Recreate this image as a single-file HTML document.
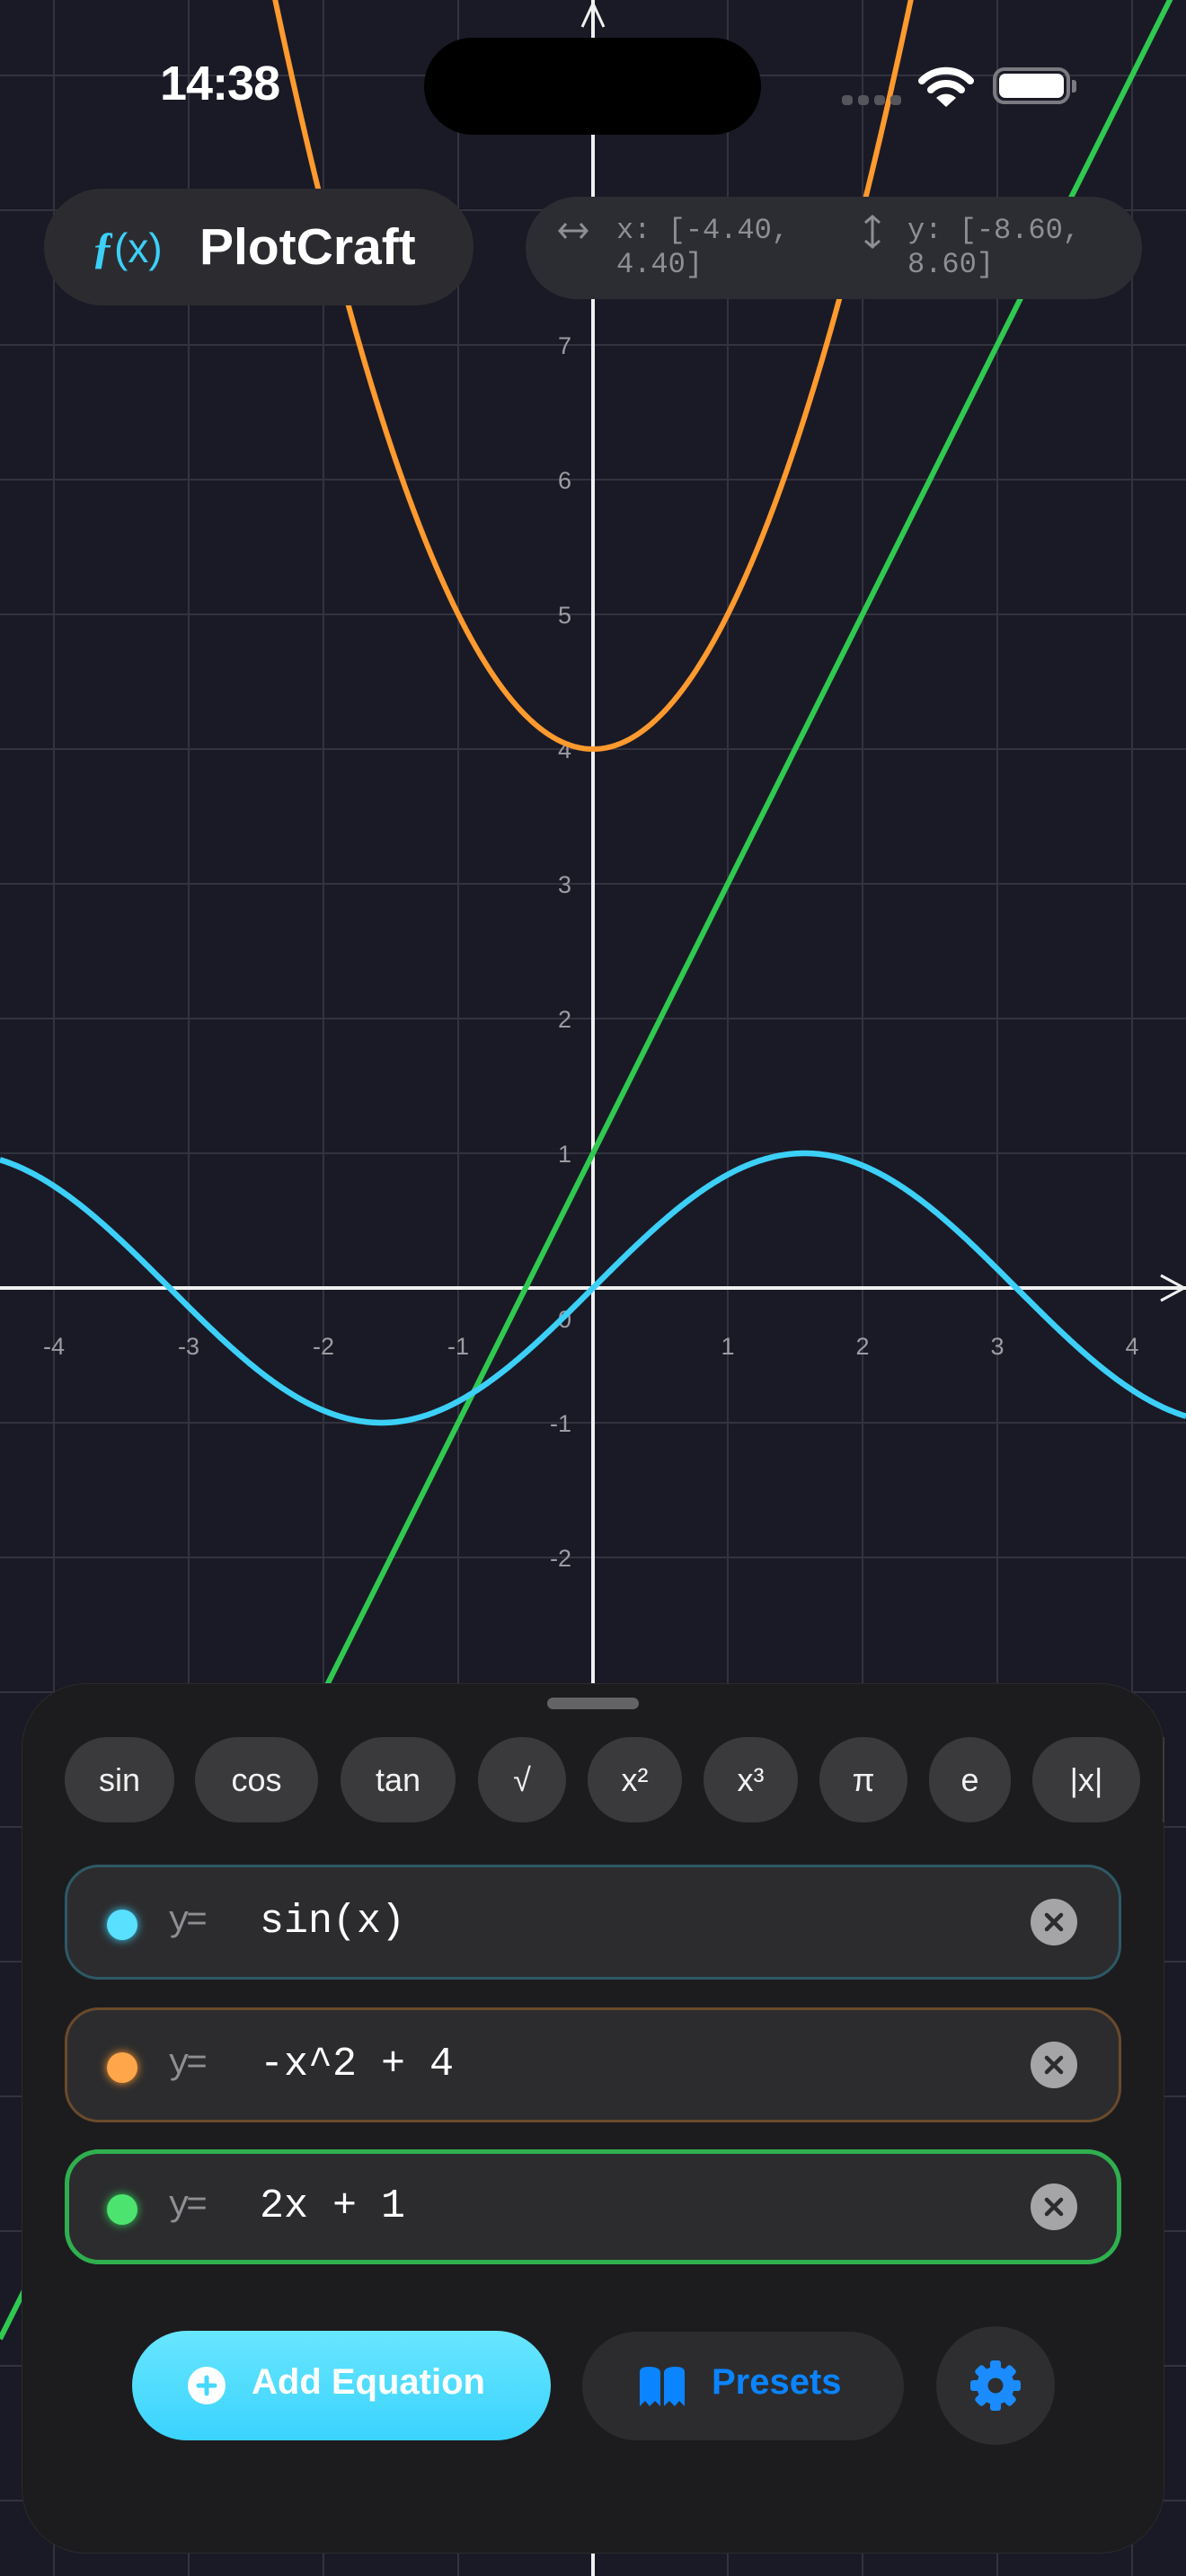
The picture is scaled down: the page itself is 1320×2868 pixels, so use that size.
<!DOCTYPE html>
<html><head><meta charset="utf-8">
<style>
*{margin:0;padding:0;box-sizing:border-box}
html,body{width:1320px;height:2868px;overflow:hidden;background:#1a1a26}
body{position:relative;font-family:"Liberation Sans",sans-serif}
.abs{position:absolute}
.pill{position:absolute;border-radius:70px;background:#2c2c30}
.chip{position:absolute;top:1934px;height:95px;border-radius:48px;background:#3a3a3c;color:#f2f2f2;font-size:36px;display:flex;align-items:center;justify-content:center}
.row{position:absolute;left:72px;width:1176px;height:128px;border-radius:38px;background:#2c2c2e;border:3px solid}
.dot{position:absolute;left:44px;top:47px;width:34px;height:34px;border-radius:50%}
.yeq{position:absolute;left:112px;top:0;line-height:122px;font-size:40px;color:#8e8e93;font-family:"Liberation Mono",monospace;letter-spacing:-4px}
.expr{position:absolute;left:214px;top:0;line-height:122px;font-size:45px;color:#fff;font-family:"Liberation Mono",monospace}
.xb{position:absolute;left:1072px;top:35px;width:52px;height:52px;border-radius:50%;background:#a5a5a8}
</style></head><body>
<svg class="abs" style="left:0;top:0" width="1320" height="2868" viewBox="0 0 1320 2868">
<g id="grid" stroke="#33333f" stroke-width="2"></g>
<g id="labels" fill="#9c9ca4" font-family="Liberation Sans,sans-serif" font-size="27"></g>
<line x1="660" y1="0" x2="660" y2="2868" stroke="#f0f0f0" stroke-width="4"/>
<line x1="0" y1="1434" x2="1320" y2="1434" stroke="#f0f0f0" stroke-width="4"/>
<path d="M648 30 L660 4 L672 30" fill="none" stroke="#f0f0f0" stroke-width="3"/>
<path d="M1292 1420 L1318 1434 L1292 1448" fill="none" stroke="#f0f0f0" stroke-width="3"/>
<path id="pg" fill="none" stroke="#30c950" stroke-width="6"/>
<path id="po" fill="none" stroke="#ff9a2e" stroke-width="6"/>
<path id="ps" fill="none" stroke="#3cd0f8" stroke-width="6.5"/>
</svg>
<script>
(function(){
var ns="http://www.w3.org/2000/svg",g=document.getElementById('grid'),L=document.getElementById('labels');
for(var k=-4;k<=4;k++){var x=660+150*k;if(k){var l=document.createElementNS(ns,'line');l.setAttribute('x1',x);l.setAttribute('x2',x);l.setAttribute('y1',0);l.setAttribute('y2',2868);g.appendChild(l);
var t=document.createElementNS(ns,'text');t.setAttribute('x',x);t.setAttribute('y',1508);t.setAttribute('text-anchor','middle');t.textContent=k<0?'-'+(-k):k;L.appendChild(t);}}
for(var k=-9;k<=9;k++){var y=1434-150*k;if(k){var l=document.createElementNS(ns,'line');l.setAttribute('y1',y);l.setAttribute('y2',y);l.setAttribute('x1',0);l.setAttribute('x2',1320);g.appendChild(l);
var t=document.createElementNS(ns,'text');t.setAttribute('x',636);t.setAttribute('y',y+10);t.setAttribute('text-anchor','end');t.textContent=k<0?'-'+(-k):k;L.appendChild(t);}}
var t=document.createElementNS(ns,'text');t.setAttribute('x',636);t.setAttribute('y',1478);t.setAttribute('text-anchor','end');t.textContent='0';L.appendChild(t);
function P(f){var d='';for(var i=0;i<=880;i++){var x=-4.4+i*0.01;d+=(i?'L':'M')+(660+150*x).toFixed(1)+' '+(1434-150*f(x)).toFixed(1);}return d;}
document.getElementById('ps').setAttribute('d',P(Math.sin));
document.getElementById('po').setAttribute('d',P(function(x){return 4+x*x}));
document.getElementById('pg').setAttribute('d',P(function(x){return 2*x+1}));
})();
</script>

<!-- status bar -->
<div class="abs" style="left:178px;top:62px;font-size:54px;font-weight:bold;color:#fff;letter-spacing:-1px">14:38</div>
<div class="abs" style="left:472px;top:42px;width:375px;height:108px;border-radius:54px;background:#000"></div>
<div class="abs" style="left:937px;top:106px;width:12px;height:11px;border-radius:4px;background:#55555c"></div>
<div class="abs" style="left:955px;top:106px;width:12px;height:11px;border-radius:4px;background:#55555c"></div>
<div class="abs" style="left:973px;top:106px;width:12px;height:11px;border-radius:4px;background:#55555c"></div>
<div class="abs" style="left:991px;top:106px;width:12px;height:11px;border-radius:4px;background:#55555c"></div>
<svg class="abs" style="left:1022px;top:72px" width="62" height="48" viewBox="0 0 62 48">
<path d="M4 18 A38 38 0 0 1 58 18" fill="none" stroke="#fff" stroke-width="8" stroke-linecap="round"/>
<path d="M14 28 A24 24 0 0 1 48 28" fill="none" stroke="#fff" stroke-width="8" stroke-linecap="round"/>
<path d="M20 37 L31 47 L42 37 A16 16 0 0 0 20 37Z" fill="#fff"/>
</svg>
<div class="abs" style="left:1105px;top:75px;width:86px;height:41px;border-radius:13px;border:4px solid #7a7a80"></div>
<div class="abs" style="left:1112px;top:82px;width:72px;height:27px;border-radius:7px;background:#fff"></div>
<div class="abs" style="left:1193px;top:89px;width:5px;height:14px;border-radius:0 3px 3px 0;background:#7a7a80"></div>

<!-- header pills -->
<div class="pill" style="left:49px;top:210px;width:478px;height:130px"></div>
<div class="abs" style="left:102px;top:246px;font-size:50px;color:#3cd0f8;font-style:italic;font-weight:bold;font-family:'Liberation Serif',serif">ƒ<span style="font-family:'Liberation Sans',sans-serif;font-style:normal;font-weight:normal;font-size:46px">(x)</span></div>
<div class="abs" style="left:222px;top:242px;font-size:57px;font-weight:bold;color:#fff">PlotCraft</div>
<div class="pill" style="left:585px;top:219px;width:686px;height:114px;border-radius:57px;background:#2c2d32"></div>
<svg class="abs" style="left:620px;top:244px" width="36" height="26" viewBox="0 0 36 26"><path d="M3 13H33M10 5L3 13L10 21M26 5L33 13L26 21" fill="none" stroke="#8e8e93" stroke-width="3"/></svg>
<div class="abs" style="left:686px;top:238px;font-family:'Liberation Mono',monospace;font-size:32px;line-height:38px;color:#8e8e93;white-space:pre">x: [-4.40,
4.40]</div>
<svg class="abs" style="left:958px;top:238px" width="26" height="40" viewBox="0 0 26 40"><path d="M13 3V37M5 10L13 3L21 10M5 30L13 37L21 30" fill="none" stroke="#8e8e93" stroke-width="3"/></svg>
<div class="abs" style="left:1010px;top:238px;font-family:'Liberation Mono',monospace;font-size:32px;line-height:38px;color:#8e8e93;white-space:pre">y: [-8.60,
8.60]</div>

<!-- bottom panel -->
<div class="abs" style="left:24px;top:1874px;width:1272px;height:969px;border-radius:72px;background:#1c1c1e;border:1px solid #2a2a2e"></div>
<div class="abs" style="left:609px;top:1890px;width:102px;height:13px;border-radius:7px;background:#636366"></div>
<div class="chip" style="left:72px;width:122px">sin</div>
<div class="chip" style="left:217px;width:137px">cos</div>
<div class="chip" style="left:379px;width:128px">tan</div>
<div class="chip" style="left:532px;width:98px">√</div>
<div class="chip" style="left:654px;width:105px">x²</div>
<div class="chip" style="left:783px;width:105px">x³</div>
<div class="chip" style="left:912px;width:98px">π</div>
<div class="chip" style="left:1034px;width:91px">e</div>
<div class="chip" style="left:1149px;width:120px">|x|</div>
<div class="abs" style="left:1294px;top:1934px;width:2px;height:95px;background:#3a3a3c"></div>

<div class="row" style="top:2076px;border-color:#2e5966">
<div class="dot" style="background:#5ae0ff;box-shadow:0 0 10px #3cd0f8"></div><div class="yeq">y=</div><div class="expr">sin(x)</div>
<div class="xb"><svg width="52" height="52"><path d="M18 18L34 34M34 18L18 34" stroke="#2c2c2e" stroke-width="4.5" stroke-linecap="round"/></svg></div></div>
<div class="row" style="top:2235px;border-color:#6a4a2c">
<div class="dot" style="background:#ffa64a;box-shadow:0 0 10px #ff9a2e"></div><div class="yeq">y=</div><div class="expr">-x^2 + 4</div>
<div class="xb"><svg width="52" height="52"><path d="M18 18L34 34M34 18L18 34" stroke="#2c2c2e" stroke-width="4.5" stroke-linecap="round"/></svg></div></div>
<div class="row" style="top:2393px;border:5px solid #2fb04f">
<div class="dot" style="left:42px;top:45px;background:#4ce46e;box-shadow:0 0 10px #30d158"></div><div class="yeq" style="left:110px;line-height:118px">y=</div><div class="expr" style="left:212px;line-height:118px">2x + 1</div>
<div class="xb" style="left:1070px;top:33px"><svg width="52" height="52"><path d="M18 18L34 34M34 18L18 34" stroke="#2c2c2e" stroke-width="4.5" stroke-linecap="round"/></svg></div></div>

<!-- buttons -->
<div class="abs" style="left:147px;top:2595px;width:466px;height:122px;border-radius:61px;background:linear-gradient(#68e6ff,#3ad3fd)"></div>
<svg class="abs" style="left:209px;top:2635px" width="42" height="42"><circle cx="21" cy="21" r="21" fill="#fff"/><path d="M21 12V30M12 21H30" stroke="#46d8fd" stroke-width="5" stroke-linecap="round"/></svg>
<div class="abs" style="left:280px;top:2630px;font-size:40px;font-weight:bold;color:#fff">Add Equation</div>
<div class="abs" style="left:648px;top:2596px;width:358px;height:121px;border-radius:61px;background:#2c2c2e"></div>
<svg class="abs" style="left:710px;top:2635px" width="54" height="44" viewBox="0 0 54 44"><path d="M2 6 Q2 0 12 0 Q24 0 25 6 V44 L19 38 L13 44 L8 38 L2 44Z" fill="#0a84ff"/><path d="M52 6 Q52 0 42 0 Q30 0 29 6 V44 L35 38 L41 44 L46 38 L52 44Z" fill="#0a84ff"/></svg>
<div class="abs" style="left:792px;top:2630px;font-size:40px;font-weight:bold;color:#0a84ff">Presets</div>
<div class="abs" style="left:1042px;top:2590px;width:132px;height:132px;border-radius:50%;background:#2e2e30"></div>
<svg class="abs" style="left:1078px;top:2626px" width="60" height="60" viewBox="-30 -30 60 60">
<g fill="#1a8cff"><circle r="21"/>
<rect x="-6" y="-28" width="12" height="14" rx="3"/><rect x="-6" y="-28" width="12" height="14" rx="3" transform="rotate(45)"/><rect x="-6" y="-28" width="12" height="14" rx="3" transform="rotate(90)"/><rect x="-6" y="-28" width="12" height="14" rx="3" transform="rotate(135)"/><rect x="-6" y="-28" width="12" height="14" rx="3" transform="rotate(180)"/><rect x="-6" y="-28" width="12" height="14" rx="3" transform="rotate(225)"/><rect x="-6" y="-28" width="12" height="14" rx="3" transform="rotate(270)"/><rect x="-6" y="-28" width="12" height="14" rx="3" transform="rotate(315)"/></g>
<circle r="8.5" fill="#2e2e30"/></svg>
</body></html>
